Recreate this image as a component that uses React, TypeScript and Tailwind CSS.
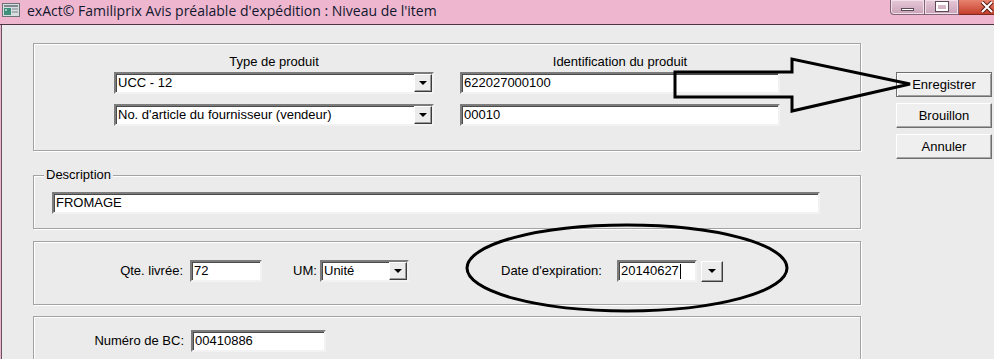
import { FC, ReactNode } from 'react';

const fieldCls =
  'h-[22px] bg-white border-2 border-t-[#7c7c7c] border-l-[#7c7c7c] border-r-[#f2f2f2] border-b-[#f2f2f2] shadow-[inset_1px_1px_0_#4a4a4a] flex items-center pl-[2px] text-[13px] text-black whitespace-nowrap overflow-hidden';

const panelCls =
  'shrink-0 border border-[#a3a3a3] shadow-[inset_1px_1px_0_#ffffff,1px_1px_0_#ffffff] flex flex-col';

const Arrow: FC = () => (
  <div className="w-0 h-0 border-l-[4px] border-r-[4px] border-t-[4px] border-l-transparent border-r-transparent border-t-black" />
);

const DropButton: FC<{ className?: string }> = ({ className = '' }) => (
  <div
    className={`bg-[#ececec] border border-t-white border-l-white border-r-[#3c3c3c] border-b-[#3c3c3c] shadow-[inset_-1px_-1px_0_#9a9a9a] flex items-center justify-center ${className}`}
  >
    <Arrow />
  </div>
);

const Select: FC<{ value: string; width: string }> = ({ value, width }) => (
  <div className={`${fieldCls} ${width} pr-0`}>
    <span className="flex-1">{value}</span>
    <DropButton className="w-[18px] h-full" />
  </div>
);

const Field: FC<{ children?: ReactNode; width: string }> = ({ children, width }) => (
  <div className={`${fieldCls} ${width}`}>{children}</div>
);

const SideButton: FC<{ label: string; main?: boolean }> = ({ label, main }) => (
  <button
    type="button"
    className={`h-[25px] w-[96px] bg-[#efefef] text-[13px] text-black flex items-center justify-center ${
      main
        ? 'border border-[#6e6e6e] shadow-[inset_1px_1px_0_#ffffff,inset_-1px_-1px_0_#a0a0a0]'
        : 'border border-t-white border-l-white border-r-[#6e6e6e] border-b-[#6e6e6e] shadow-[inset_-1px_-1px_0_#a8a8a8]'
    }`}
  >
    {label}
  </button>
);

const TitleIcon: FC = () => (
  <svg width="18" height="14" viewBox="0 0 18 14">
    <rect x="0.5" y="0.5" width="17" height="13" fill="#d8dde0" stroke="#6b7378" />
    <rect x="2" y="2" width="14" height="2" fill="#7d8a92" />
    <rect x="2" y="5" width="7" height="7" fill="#3f8f7a" />
    <rect x="3" y="6" width="2" height="2" fill="#9fd1c0" />
    <rect x="10" y="5" width="6" height="2" fill="#a7b0b5" />
    <rect x="10" y="8" width="6" height="2" fill="#a7b0b5" />
  </svg>
);

const App: FC = () => {
  return (
    <div
      className="relative w-[994px] h-[359px] overflow-hidden bg-[#ebebeb] text-black"
      style={{ fontFamily: '"Liberation Sans", Arial, sans-serif' }}
    >
      {/* Title bar */}
      <div className="h-[25px] bg-[#efb6cf] border-b border-[#4d3442] flex items-start">
        <div className="mt-[3px] ml-[2px]">
          <TitleIcon />
        </div>
        <div
          className="ml-[7px] mt-[1px] text-[14px] leading-[20px] text-[#10182e]"
          style={{ fontFamily: '"Open Sans", "Noto Sans", sans-serif' }}
        >
          exAct© Familiprix Avis préalable d'expédition : Niveau de l'item
        </div>
        <div className="ml-auto flex h-[15px]">
          <div className="w-[35px] h-full rounded-bl-[4px] border border-t-0 border-[#7e6474] bg-gradient-to-b from-[#e6c8d8] to-[#c9a3b8] shadow-[inset_0_0_0_1px_#f3dfe9] flex items-center justify-center">
            <div className="w-[13px] h-[3px] mt-[4px] bg-white border border-[#5b4a55]" />
          </div>
          <div className="w-[34px] h-full border-r border-b border-[#7e6474] bg-gradient-to-b from-[#e6c8d8] to-[#c9a3b8] shadow-[inset_0_0_0_1px_#f3dfe9] flex items-center justify-center">
            <div className="w-[12px] h-[9px] -mt-[2px] border-2 border-t-[3px] border-white outline outline-1 outline-[#5b4a55]" />
          </div>
          <div className="w-[35px] h-full bg-gradient-to-b from-[#e8826f] to-[#c33d2a] border-b border-[#7a2a20] flex items-start justify-end">
            <svg width="14" height="12" viewBox="0 0 14 12" className="mt-[1px]">
              <path d="M2 1 L12 11 M12 1 L2 11" stroke="#5a1a12" strokeWidth="4" />
              <path d="M2 1 L12 11 M12 1 L2 11" stroke="#fff" strokeWidth="2" />
            </svg>
          </div>
        </div>
      </div>

      {/* Body */}
      <div className="h-[334px] border-l border-[#e8b4cc]">
        <div className="h-full border-l border-[#6a5060] flex pl-[31px]">
          {/* Panels */}
          <div className="w-[828px] flex flex-col">
            {/* Product */}
            <div className={`${panelCls} mt-[18px] h-[108px] pt-[11px] pl-[80px]`}>
              <div className="flex gap-[26px]">
                <div className="w-[320px] flex flex-col">
                  <div className="text-[13px] leading-[14px] text-center">Type de produit</div>
                  <div className="mt-[3px]">
                    <Select value="UCC - 12" width="w-[320px]" />
                  </div>
                  <div className="mt-[10px]">
                    <Select value="No. d'article du fournisseur (vendeur)" width="w-[320px]" />
                  </div>
                </div>
                <div className="w-[320px] flex flex-col">
                  <div className="text-[13px] leading-[14px] text-center">Identification du produit</div>
                  <div className="mt-[3px]">
                    <Field width="w-[320px]">622027000100</Field>
                  </div>
                  <div className="mt-[10px]">
                    <Field width="w-[320px]">00010</Field>
                  </div>
                </div>
              </div>
            </div>

            {/* Description */}
            <div className={`${panelCls} mt-[24px] h-[54px] pl-[18px]`}>
              <span className="-mt-[8px] -ml-[8px] self-start px-[2px] bg-[#ebebeb] text-[13px] leading-[14px]">
                Description
              </span>
              <div className="mt-[10px]">
                <Field width="w-[768px]">FROMAGE</Field>
              </div>
            </div>

            {/* Quantity */}
            <div className={`${panelCls} mt-[12px] h-[64px] pt-[18px]`}>
              <div className="flex items-center text-[13px]">
                <div className="w-[149px] text-right">Qte. livrée:</div>
                <div className="ml-[7px]">
                  <Field width="w-[72px]">72</Field>
                </div>
                <div className="ml-[31px] w-[27px]">UM:</div>
                <Select value="Unité" width="w-[89px]" />
                <div className="ml-[92px] w-[116px]">Date d'expiration:</div>
                <Field width="w-[80px]">
                  20140627<span className="ml-[1px] w-px h-[15px] bg-black" />
                </Field>
                <DropButton className="ml-[4px] w-[22px] h-[21px] border-[#8a8a8a] border-t-[#8a8a8a] border-l-[#8a8a8a]" />
              </div>
            </div>

            {/* Purchase order */}
            <div className={`${panelCls} mt-[11px] h-[70px] pt-[13px]`}>
              <div className="flex items-center text-[13px]">
                <div className="w-[150px] text-right">Numéro de BC:</div>
                <div className="ml-[7px]">
                  <Field width="w-[135px]">00410886</Field>
                </div>
              </div>
            </div>
          </div>

          {/* Side buttons */}
          <div className="ml-[35px] mt-[47px] flex flex-col gap-[6px]">
            <SideButton label="Enregistrer" main />
            <SideButton label="Brouillon" />
            <SideButton label="Annuler" />
          </div>
        </div>
      </div>

      {/* Hand-drawn annotations */}
      <svg className="absolute inset-0 pointer-events-none" width="994" height="359" viewBox="0 0 994 359">
        <path
          d="M675 72 L792 72 L792 59 L910 84 L792 111 L792 97 L675 97 Z"
          fill="none"
          stroke="#000"
          strokeWidth="3"
          strokeLinejoin="miter"
        />
        <ellipse cx="627" cy="268" rx="160" ry="43" fill="none" stroke="#000" strokeWidth="3" />
      </svg>
    </div>
  );
};

export default App;
